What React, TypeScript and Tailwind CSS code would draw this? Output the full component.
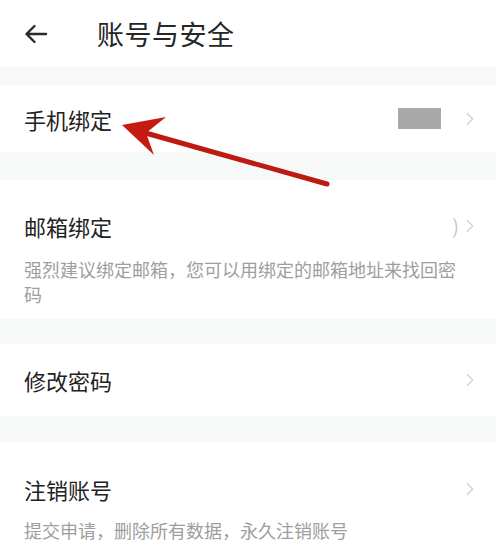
import { ChevronRight } from 'lucide-react';

const font = { fontFamily: '"Noto Sans CJK SC", "Noto Sans", sans-serif' };

function Band({ h }: { h: string }) {
  return <div className={`${h} bg-[#f7f9f9]`} />;
}

function Chevron() {
  return <ChevronRight className="h-[22px] w-[22px] text-[#d2d2d2]" strokeWidth={1.5} />;
}

export default function App() {
  return (
    <div className="relative h-[556px] w-[496px] overflow-hidden bg-white" style={font}>
      {/* header */}
      <div className="flex h-[67px] items-center">
        <svg width="24" height="20" viewBox="0 0 24 20" className="ml-[24px] text-[#2a2a2a]">
          <path d="M22 10H2.5M10.5 2L2.5 10l8 8" fill="none" stroke="currentColor" strokeWidth="2.4" strokeLinecap="round" strokeLinejoin="round" />
        </svg>
        <h1 className="ml-[49px] text-[27px] leading-none tracking-[0.5px] text-[#262626]">账号与安全</h1>
      </div>

      <Band h="h-[18px]" />

      {/* 手机绑定 */}
      <div className="flex h-[67px] items-center pl-[24px] pr-[15px]">
        <span className="text-[22px] leading-[30px] text-[#222]">手机绑定</span>
        <div className="ml-auto mr-[18px] h-[21px] w-[43px] bg-[#a9a9a9] blur-[0.6px]" />
        <Chevron />
      </div>

      <Band h="h-[28px]" />

      {/* 邮箱绑定 */}
      <div className="pb-[12px] pl-[24px] pr-[24px] pt-[31px]">
        <div className="flex items-center">
          <span className="text-[22px] leading-[30px] text-[#222]">邮箱绑定</span>
          <span className="ml-auto text-[20px] leading-none text-[#c8c8c8]">)</span>
          <div className="-mr-[9px]">
            <Chevron />
          </div>
        </div>
        <p className="mt-[16px] text-[18px] leading-[25px] text-[#9e9e9e]">
          强烈建议绑定邮箱，您可以用绑定的邮箱地址来找回密码
        </p>
      </div>

      <Band h="h-[25px]" />

      {/* 修改密码 */}
      <div className="flex h-[72px] items-center pl-[24px] pr-[15px]">
        <span className="text-[22px] leading-[30px] text-[#222]">修改密码</span>
        <div className="ml-auto">
          <Chevron />
        </div>
      </div>

      <Band h="h-[26px]" />

      {/* 注销账号 */}
      <div className="pl-[24px] pr-[15px] pt-[32px]">
        <div className="flex items-center">
          <span className="text-[22px] leading-[30px] text-[#222]">注销账号</span>
          <div className="ml-auto">
            <Chevron />
          </div>
        </div>
        <p className="mt-[14px] text-[18px] leading-[25px] text-[#9e9e9e]">提交申请，删除所有数据，永久注销账号</p>
      </div>

      {/* annotation arrow */}
      <svg className="pointer-events-none absolute left-0 top-0" width="496" height="556" viewBox="0 0 496 556">
        <line x1="142" y1="132" x2="327" y2="184" stroke="#bd1a12" strokeWidth="5" strokeLinecap="round" />
        <polygon points="122,125 166,117 146,133 154,155" fill="#c41a10" />
      </svg>
    </div>
  );
}
